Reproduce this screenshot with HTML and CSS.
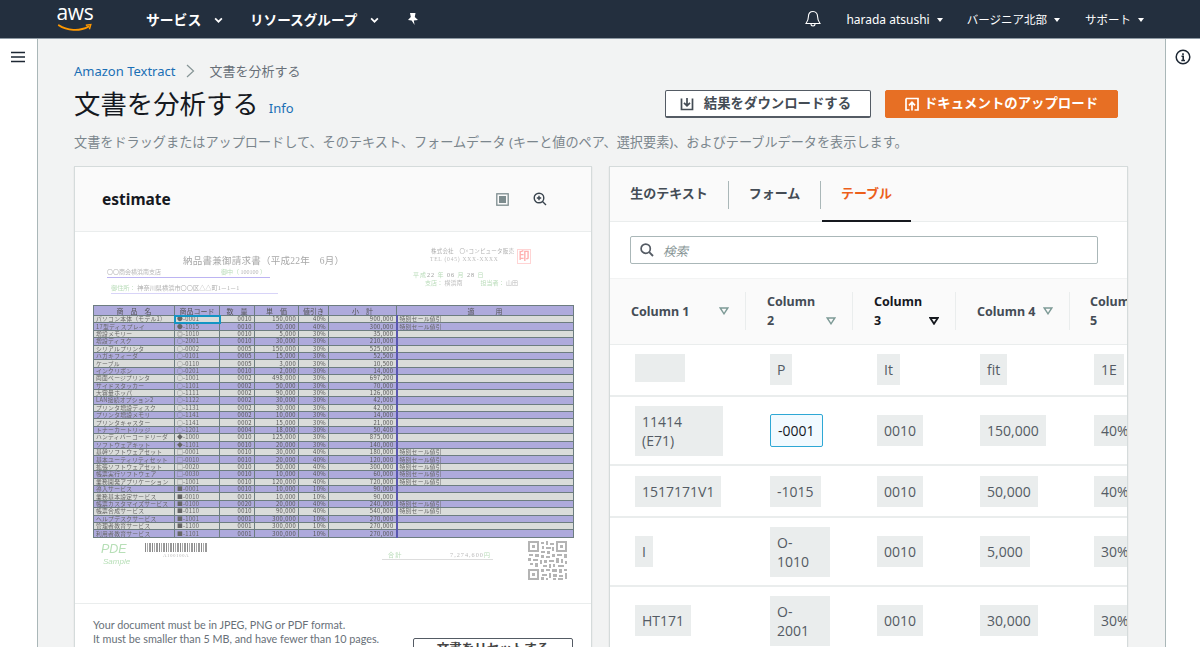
FILE: index.html
```html
<!DOCTYPE html>
<html lang="ja">
<head>
<meta charset="utf-8">
<title>文書を分析する</title>
<link rel="stylesheet" href="styles.css">
</head>
<body>
<header class="topbar">
  <div class="logo">
    <span class="logo-text">aws</span>
    <svg class="logo-smile" viewBox="0 0 38 10" width="38" height="10"><path d="M1 2.500C10 8.500 24 9.500 34 4" fill="none" stroke="#f90" stroke-width="2" stroke-linecap="round"/><path d="M31 2.500L36.500 1.800L35 7" fill="none" stroke="#f90" stroke-width="1.600"/></svg>
  </div>
  <nav class="menu">
    <span class="menu-item menu-services">サービス</span><svg class="caret caret-big" viewBox="0 0 8 5"><path d="M1 1l3 3 3-3" fill="none" stroke="#fff" stroke-width="1.500"/></svg>
    <span class="menu-item menu-groups">リソースグループ</span><svg class="caret caret-big" viewBox="0 0 8 5"><path d="M1 1l3 3 3-3" fill="none" stroke="#fff" stroke-width="1.500"/></svg>
    <svg class="pin" viewBox="0 0 12 14" width="12" height="14"><path d="M3 1h5.500L7.800 5 11 8 6.800 8.600 7.600 13 4.600 8.600 1 8 3.800 5z" fill="#fff"/></svg>
  </nav>
  <div class="account">
    <svg class="bell" viewBox="0 0 16 18" width="16" height="18"><path d="M8 1.500c-3 0-4.600 2.300-4.600 5.200 0 3.600-1 5-2.400 6.800h14c-1.400-1.800-2.400-3.200-2.400-6.800 0-2.900-1.600-5.200-4.600-5.200zM6 14c0 2.600 4 2.600 4 0" fill="none" stroke="#fff" stroke-width="1.100"/></svg>
    <span class="acct acct-user">harada atsushi</span><span class="tri"></span>
    <span class="acct acct-region">バージニア北部</span><span class="tri"></span>
    <span class="acct acct-support">サポート</span><span class="tri"></span>
  </div>
</header>
<div class="layout">
  <aside class="sidenav">
    <svg viewBox="0 0 14 12" width="14" height="12"><path d="M0 1.500h14M0 6h14M0 10.500h14" stroke="#1d2733" stroke-width="1.500"/></svg>
  </aside>
  <main class="main">
    <div class="crumbs"><a class="link">Amazon Textract</a>
      <svg class="crumb-sep" viewBox="0 0 9 14" width="9" height="14"><path d="M1 1l6.500 6L1 13" fill="none" stroke="#879596" stroke-width="1.200"/></svg>
      <span>文書を分析する</span></div>
    <div class="head">
      <h1>文書を分析する</h1><a class="link info">Info</a>
      <div class="actions">
        <button class="btn btn-plain"><svg viewBox="0 0 14 14" width="14" height="14"><path d="M1.500 1.500V12.500H12.500V1.500M7 1v7.500M4 5.800L7 8.800 10 5.800" fill="none" stroke="#444c55" stroke-width="1.700"/></svg>結果をダウンロードする</button>
        <button class="btn btn-primary"><svg viewBox="0 0 14 14" width="14" height="14"><path d="M1 1.500H13V13H9.500M4.500 13H1V1.500M7 13.500V5.500M4 8.300L7 5.300 10 8.300" fill="none" stroke="#fff" stroke-width="1.700"/></svg>ドキュメントのアップロード</button>
      </div>
    </div>
    <p class="desc">文書をドラッグまたはアップロードして、そのテキスト、フォームデータ (キーと値のペア、選択要素)、およびテーブルデータを表示します。</p>
    <div class="cards">
      <section class="card card-doc">
        <div class="doc-head">
          <h2>estimate</h2>
          <svg class="doc-icon-a" viewBox="0 0 13 13" width="13" height="13"><rect x="0.800" y="0.800" width="11.400" height="11.400" fill="none" stroke="#7d8c8e" stroke-width="1.300"/><rect x="3" y="3" width="7" height="7" fill="#7d8c8e"/></svg>
          <svg class="doc-icon-b" viewBox="0 0 14 14" width="14" height="14"><circle cx="6" cy="6" r="4.800" fill="none" stroke="#38434d" stroke-width="1.400"/><path d="M9.500 9.500L13 13M3.800 6h4.400M6 3.800v4.400" stroke="#38434d" stroke-width="1.400"/></svg>
        </div>
        <div class="doc-body">
          <div class="sheet">
            <div class="sheet-title">納品書兼御請求書（平成22年　6月）</div>
            <div class="sheet-company">株式会社　〇×コンピュータ販売</div>
            <div class="sheet-tel">TEL (045) XXX-XXXX</div>
            <div class="sheet-stamp">印</div>
            <div class="sheet-client"><span>〇〇商会横浜南支店</span><span class="green">御中（ <span class="grey">100100</span> ）</span></div>
            <div class="sheet-address"><span class="green">御住所：</span> 神奈川県横浜市〇〇区△△町1－1－1</div>
            <div class="sheet-date"><span class="green">平成</span>22 <span class="green">年</span> 06 <span class="green">月</span> 28 <span class="green">日</span></div>
            <div class="sheet-branch"><span class="green">支店：</span> 横浜南　　　<span class="green">担当者：</span> 山田</div>
            <table class="bill">
              <colgroup><col class="b1"><col class="b2"><col class="b3"><col class="b4"><col class="b5"><col class="b6"><col></colgroup>
              <thead><tr><th>商　品　名</th><th>商品コード</th><th>数　量</th><th>単　価</th><th>値引き</th><th>小　計</th><th>適　　　用</th></tr></thead>
              <tbody>
                <tr><td>パソコン本体（モデル1）</td><td class="hit">●-0001</td><td class="n">0010</td><td class="n">150,000</td><td class="n">40%</td><td class="n">900,000</td><td>特別セール値引</td></tr>
                <tr><td>17型ディスプレイ</td><td>●-1015</td><td class="n">0010</td><td class="n">50,000</td><td class="n">40%</td><td class="n">300,000</td><td>特別セール値引</td></tr>
                <tr><td>増設メモリー</td><td>◎-1010</td><td class="n">0010</td><td class="n">5,000</td><td class="n">30%</td><td class="n">35,000</td><td></td></tr>
                <tr><td>増設ディスク</td><td>○-2001</td><td class="n">0010</td><td class="n">30,000</td><td class="n">30%</td><td class="n">210,000</td><td></td></tr>
                <tr><td>シリアルプリンタ</td><td>○-0002</td><td class="n">0005</td><td class="n">150,000</td><td class="n">30%</td><td class="n">525,000</td><td></td></tr>
                <tr><td>ハガキフィーダ</td><td>○-0101</td><td class="n">0005</td><td class="n">15,000</td><td class="n">30%</td><td class="n">52,500</td><td></td></tr>
                <tr><td>ケーブル</td><td>○-0110</td><td class="n">0005</td><td class="n">3,000</td><td class="n">30%</td><td class="n">10,500</td><td></td></tr>
                <tr><td>インクリボン</td><td>○-0201</td><td class="n">0010</td><td class="n">2,000</td><td class="n">30%</td><td class="n">14,000</td><td></td></tr>
                <tr><td>両面ページプリンタ</td><td>○-1001</td><td class="n">0002</td><td class="n">498,000</td><td class="n">30%</td><td class="n">697,200</td><td></td></tr>
                <tr><td>サイドスタッカー</td><td>○-1101</td><td class="n">0002</td><td class="n">50,000</td><td class="n">30%</td><td class="n">70,000</td><td></td></tr>
                <tr><td>大容量ホッパ</td><td>○-1111</td><td class="n">0002</td><td class="n">90,000</td><td class="n">30%</td><td class="n">126,000</td><td></td></tr>
                <tr><td>LAN接続オプション2</td><td>○-1122</td><td class="n">0002</td><td class="n">30,000</td><td class="n">30%</td><td class="n">42,000</td><td></td></tr>
                <tr><td>プリンタ増設ディスク</td><td>○-1131</td><td class="n">0002</td><td class="n">30,000</td><td class="n">30%</td><td class="n">42,000</td><td></td></tr>
                <tr><td>プリンタ増設メモリ</td><td>○-1141</td><td class="n">0002</td><td class="n">10,000</td><td class="n">30%</td><td class="n">14,000</td><td></td></tr>
                <tr><td>プリンタキャスター</td><td>○-1141</td><td class="n">0002</td><td class="n">15,000</td><td class="n">30%</td><td class="n">21,000</td><td></td></tr>
                <tr><td>トナーカートリッジ</td><td>○-1201</td><td class="n">0004</td><td class="n">18,000</td><td class="n">30%</td><td class="n">50,400</td><td></td></tr>
                <tr><td>ハンディバーコードリーダ</td><td>◆-1000</td><td class="n">0010</td><td class="n">125,000</td><td class="n">30%</td><td class="n">875,000</td><td></td></tr>
                <tr><td>ソフトウェアキット</td><td>◆-1101</td><td class="n">0010</td><td class="n">20,000</td><td class="n">30%</td><td class="n">140,000</td><td></td></tr>
                <tr><td>基幹ソフトウェアセット</td><td>□-0001</td><td class="n">0010</td><td class="n">30,000</td><td class="n">40%</td><td class="n">180,000</td><td>特別セール値引</td></tr>
                <tr><td>基本ユーティリティセット</td><td>□-0010</td><td class="n">0010</td><td class="n">20,000</td><td class="n">40%</td><td class="n">120,000</td><td>特別セール値引</td></tr>
                <tr><td>拡張ソフトウェアセット</td><td>□-0020</td><td class="n">0010</td><td class="n">50,000</td><td class="n">40%</td><td class="n">300,000</td><td>特別セール値引</td></tr>
                <tr><td>帳票実行ソフトウェア</td><td>□-0030</td><td class="n">0010</td><td class="n">10,000</td><td class="n">40%</td><td class="n">60,000</td><td>特別セール値引</td></tr>
                <tr><td>業務開発アプリケーション</td><td>□-1001</td><td class="n">0010</td><td class="n">120,000</td><td class="n">40%</td><td class="n">720,000</td><td>特別セール値引</td></tr>
                <tr><td>導入サービス</td><td>■-0001</td><td class="n">0010</td><td class="n">10,000</td><td class="n">10%</td><td class="n">90,000</td><td></td></tr>
                <tr><td>業務基本設定サービス</td><td>■-0010</td><td class="n">0010</td><td class="n">10,000</td><td class="n">10%</td><td class="n">90,000</td><td></td></tr>
                <tr><td>帳票カスタマイズサービス</td><td>■-0100</td><td class="n">0020</td><td class="n">20,000</td><td class="n">40%</td><td class="n">240,000</td><td>特別セール値引</td></tr>
                <tr><td>帳票合成サービス</td><td>■-0110</td><td class="n">0010</td><td class="n">90,000</td><td class="n">40%</td><td class="n">540,000</td><td>特別セール値引</td></tr>
                <tr><td>ヘルプデスクサービス</td><td>■-1001</td><td class="n">0001</td><td class="n">300,000</td><td class="n">10%</td><td class="n">270,000</td><td></td></tr>
                <tr><td>管理者教育サービス</td><td>■-1100</td><td class="n">0001</td><td class="n">300,000</td><td class="n">10%</td><td class="n">270,000</td><td></td></tr>
                <tr><td>利用者教育サービス</td><td>■-1101</td><td class="n">0001</td><td class="n">300,000</td><td class="n">10%</td><td class="n">270,000</td><td></td></tr>
              </tbody>
            </table>
            <div class="sheet-foot">
              <div class="pde"><div class="pde-big">PDE</div><div class="pde-small">Sample</div></div>
              <div class="barcode-wrap"><div class="barcode"></div><div class="barcode-num">A100100A</div></div>
              <div class="total"><span class="green">合計</span><span class="total-val">7,274,600<span class="green">円</span></span></div>
              <svg class="qr" viewBox="0 0 39 39" width="39" height="39">
                <path d="M0 0h11v11H0zM2 2v7h7V2zM4 4h3v3H4zM28 0h11v11H28zM30 2v7h7V2zM32 4h3v3h-3zM0 28h11v11H0zM2 30v7h7v-7zM4 32h3v3H4z" fill="#b4b4b4" fill-rule="evenodd"/>
                <path d="M13 1h3v2h-3zM18 0h2v4h-2zM22 2h4v2h-4zM14 5h2v3h-2zM18 6h5v2h-5zM24 6h2v4h-2zM13 10h4v2h-4zM19 10h3v3h-3zM1 13h4v2H1zM7 13h4v3H7zM13 14h3v3h-3zM18 15h4v2h-4zM24 13h3v3h-3zM29 13h5v2h-5zM36 13h3v4h-3zM0 17h3v3H0zM5 18h5v2H5zM12 19h2v4h-2zM16 19h3v3h-3zM21 19h5v2h-5zM28 17h3v5h-3zM33 18h2v4h-2zM37 20h2v3h-2zM2 22h3v2H2zM7 22h3v4H7zM15 24h4v2h-4zM21 23h2v4h-2zM25 23h2v3h-2zM30 24h6v2h-6zM13 28h3v3h-3zM18 28h4v2h-4zM24 28h5v3h-5zM31 28h3v4h-3zM36 28h3v2h-3zM14 33h5v2h-5zM21 32h2v5h-2zM25 33h4v3h-4zM31 34h4v2h-4zM37 32h2v6h-2zM13 36h3v3h-3zM18 37h2v2h-2zM25 37h3v2h-3zM30 37h5v2h-5z" fill="#b4b4b4"/>
              </svg>
            </div>
          </div>
        </div>
        <div class="doc-foot">
          <p class="doc-note">Your document must be in JPEG, PNG or PDF format.<br>It must be smaller than 5 MB, and have fewer than 10 pages.<br>Handwriting, forms and tables are supported in the demo.</p>
          <button class="btn-clear">文書をリセットする</button>
        </div>
      </section>
      <section class="card card-results">
        <div class="tabs">
          <span class="tab tab-raw">生のテキスト</span>
          <span class="tab tab-form">フォーム</span>
          <span class="tab tab-table">テーブル</span>
        </div>
        <div class="search-wrap">
          <div class="search">
            <svg viewBox="0 0 14 14" width="14" height="14"><circle cx="5.700" cy="5.700" r="4.600" fill="none" stroke="#545b64" stroke-width="1.700"/><path d="M9.200 9.200L13 13" stroke="#545b64" stroke-width="1.900"/></svg>
            <span>検索</span>
          </div>
        </div>
        <div class="table-clip">
          <table class="results">
            <colgroup><col class="c1"><col class="c2"><col class="c3"><col class="c4"><col class="c5"></colgroup>
            <thead>
              <tr>
                <th class="h1st"><div class="th-in"><span class="th-label">Column 1</span><svg class="sort" viewBox="0 0 10 8"><path d="M1.200 1h7.600L5 6.800z" fill="none" stroke="#7d9a96" stroke-width="1.400"/></svg></div></th>
                <th><div class="th-in th-low"><span class="th-label">Column 2</span><svg class="sort" viewBox="0 0 10 8"><path d="M1.200 1h7.600L5 6.800z" fill="none" stroke="#7d9a96" stroke-width="1.400"/></svg></div></th>
                <th class="th-active"><div class="th-in th-low"><span class="th-label">Column 3</span><svg class="sort" viewBox="0 0 10 8"><path d="M1.200 1h7.600L5 6.800z" fill="none" stroke="#16191f" stroke-width="1.800"/></svg></div></th>
                <th><div class="th-in"><span class="th-label th-nowrap">Column 4</span><svg class="sort" viewBox="0 0 10 8"><path d="M1.200 1h7.600L5 6.800z" fill="none" stroke="#7d9a96" stroke-width="1.400"/></svg></div></th>
                <th class="th-last"><div class="th-in"><span class="th-label th-wide">Column 5</span></div></th>
              </tr>
            </thead>
            <tbody>
              <tr class="r-s"><td class="first"><span class="chip chip-empty"></span></td><td><span class="chip">P</span></td><td><span class="chip">It</span></td><td><span class="chip">fit</span></td><td><span class="chip">1E</span></td></tr>
              <tr class="r-d"><td class="first"><span class="chip chip-wrap">11414 (E71)</span></td><td><span class="chip chip-hit">-0001</span></td><td><span class="chip">0010</span></td><td><span class="chip">150,000</span></td><td><span class="chip">40%</span></td></tr>
              <tr class="r-s"><td class="first"><span class="chip">1517171V1</span></td><td><span class="chip">-1015</span></td><td><span class="chip">0010</span></td><td><span class="chip">50,000</span></td><td><span class="chip">40%</span></td></tr>
              <tr class="r-d"><td class="first"><span class="chip">I</span></td><td><span class="chip chip-code">O-1010</span></td><td><span class="chip">0010</span></td><td><span class="chip">5,000</span></td><td><span class="chip">30%</span></td></tr>
              <tr class="r-d"><td class="first"><span class="chip">HT171</span></td><td><span class="chip chip-code">O-2001</span></td><td><span class="chip">0010</span></td><td><span class="chip">30,000</span></td><td><span class="chip">30%</span></td></tr>
            </tbody>
          </table>
        </div>
      </section>
    </div>
  </main>
  <aside class="tools">
    <svg viewBox="0 0 16 16" width="16" height="16"><circle cx="8" cy="8" r="6.800" fill="none" stroke="#1d2733" stroke-width="1.500"/><path d="M6.500 7.300H8.200V11.500M6.300 11.500H10M8 4.200v1.800" fill="none" stroke="#1d2733" stroke-width="1.600"/></svg>
  </aside>
</div>
</body>
</html>
```
FILE: styles.css
```css
* { box-sizing: border-box; }
html, body { margin: 0; height: 647px; overflow: hidden; }
body { font-family: "Noto Sans", "Noto Sans CJK JP", sans-serif; color: #16191f; background: #fff; }

.topbar { height: 39px; background: #232f3e; border-bottom: 1px solid #8d99a3; display: flex; align-items: center; color: #fff; }
.logo { margin-left: 56px; width: 38px; height: 26px; position: relative; display: flex; flex-direction: column; align-items: center; }
.logo-text { font: 400 21px/18px "Open Sans", sans-serif; color: #fff; letter-spacing: -0.3px; margin-top: -3px; }
.logo-smile { margin-top: 2px; }
.menu { display: flex; align-items: center; margin-left: 52px; }
.menu-item { font-size: 13.800px; font-weight: 700; }
.menu-services { width: 56px; }
.menu-groups { width: 108px; margin-left: 27px; white-space: nowrap; font-size: 13.600px; }
.caret { display: block; }
.caret-big { width: 9px; height: 6px; margin-left: 12px; margin-top: 2px; }
.pin { margin-left: 28px; }
.account { margin-left: auto; display: flex; align-items: center; padding-right: 56px; }
.bell { margin-right: 25px; }
.acct { font-size: 11.500px; white-space: nowrap; }
.acct-user { font-size: 12px; }
.tri { width: 0; height: 0; border: 3.500px solid transparent; border-top: 4px solid #fff; margin: 4px 0 0 7px; }
.acct-region { margin-left: 24px; }
.acct-support { margin-left: 25px; }

.layout { display: flex; height: 608px; }
.sidenav { width: 38px; background: #fff; border-right: 1px solid #aab7b8; flex: none; display: flex; justify-content: center; padding-top: 12px; padding-right: 2px; }
.tools { width: 35px; background: #fff; border-left: 1px solid #aab7b8; flex: none; display: flex; justify-content: center; padding-top: 10px; }
.main { flex: 1; min-width: 0; background: #f2f3f3; padding: 22px 36px 0 36px; overflow: hidden; }

.crumbs { display: flex; align-items: center; font-size: 13px; line-height: 20px; color: #687078; }
.link { color: #1a6fb5; }
.crumb-sep { margin: 0 14px 0 11px; }
.head { display: flex; align-items: center; height: 38px; margin-top: 4px; position: relative; }
h1 { font-size: 26.400px; font-weight: 400; line-height: 38px; margin: 0; }
.info { font-size: 13px; margin-left: 10px; margin-top: 8px; }
.actions { margin-left: auto; display: flex; gap: 14px; margin-right: 11px; }
.btn { height: 28px; font: 700 13.400px/1 "Noto Sans", "Noto Sans CJK JP", sans-serif; border-radius: 2px; display: flex; align-items: center; justify-content: center; padding: 0; }
.btn-plain { width: 206px; background: #fff; border: 1px solid #545b64; border-bottom-width: 2px; color: #444c55; gap: 10px; padding-right: 5px; }
.btn-primary { width: 233px; background: #e76f24; border: 1px solid #e76f24; color: #fff; gap: 5px; }
.desc { margin: 9px 0 0; font-size: 13.150px; line-height: 20px; color: #7b868d; white-space: nowrap; }
.cards { display: flex; gap: 17px; margin-top: 14px; align-items: flex-start; }
.card { background: #fff; border: 1px solid #d5dbdb; height: 520px; box-shadow: 0 1px 1px rgba(0,28,36,.15); flex: none; }
.card-doc { width: 518px; }
.card-results { width: 519px; }

.doc-head { height: 65px; background: #fafafa; border-bottom: 1px solid #eaeded; display: flex; align-items: center; padding: 0 44px 0 27px; }
h2 { font-size: 15.500px; font-weight: 700; margin: 0 auto 0 0; }
.doc-icon-a { margin-right: 24px; }

.doc-body { height: 372px; border-bottom: 1px solid #eaeded; padding: 4px 0 0 18px; }
.sheet { position: relative; width: 481px; height: 340px; font-family: "Liberation Serif", "Noto Sans CJK JP", serif; color: #8a8a8a; filter: blur(0.25px); }
.green { color: #b9dcb9; }
.grey { color: #b5b5b5; }
.sheet-title { position: absolute; left: 90px; top: 17px; font-size: 9.500px; letter-spacing: 0.25px; white-space: nowrap; color: #a8a8a8; }
.sheet-company { position: absolute; left: 338px; top: 11px; font-size: 5.500px; letter-spacing: .2px; white-space: nowrap; color: #b0b0b0; }
.sheet-tel { position: absolute; left: 337px; top: 20px; font-size: 5.500px; letter-spacing: .8px; white-space: nowrap; color: #bbb; }
.sheet-stamp { position: absolute; left: 424px; top: 13px; width: 14px; height: 15px; border: 1px solid #ffd4d4; color: #ffb0b0; font-size: 11px; line-height: 13px; text-align: center; font-weight: 700; }
.sheet-client { position: absolute; left: 14px; top: 31px; width: 163px; border-bottom: 1px solid #bcb4f2; font-size: 6px; display: flex; justify-content: space-between; white-space: nowrap; color: #b5b5b5; padding-right: 4px; height: 11px; line-height: 10px; }
.sheet-address { position: absolute; left: 18px; top: 47px; width: 167px; border-bottom: 1px solid #d8d4f8; font-size: 6.200px; color: #b0b0b0; white-space: nowrap; height: 11px; line-height: 10px; }
.sheet-date { position: absolute; left: 320px; top: 34px; font-size: 6px; color: #999; white-space: nowrap; letter-spacing: 1px; }
.sheet-branch { position: absolute; left: 332px; top: 42px; font-size: 6px; color: #bbb; white-space: nowrap; }

.bill { position: absolute; left: 0; top: 69px; width: 481px; table-layout: fixed; border-collapse: collapse; border: 1.500px solid #7470b4; font-family: "Noto Sans CJK JP", sans-serif; font-size: 6px; color: #666; }
.b1 { width: 81px; } .b2 { width: 45px; } .b3 { width: 35px; } .b4 { width: 44px; } .b5 { width: 30px; } .b6 { width: 68px; }
.bill th { height: 10px; font-size: 7px; font-weight: 400; padding: 0; background: #aeaadc; border: 1px solid #6d7d80; line-height: 8px; white-space: nowrap; overflow: hidden; color: #555; }
.bill td { height: 7.400px; padding: 0 2px; line-height: 6px; border: 1px solid #6d7d80; white-space: nowrap; overflow: hidden; font-size: 5.800px; letter-spacing: .25px; }
.bill tbody tr:nth-child(odd) td { background: #dadcda; }
.bill tbody tr:nth-child(even) td { background: #aeaadc; }
.bill td.n { text-align: right; color: #555; letter-spacing: .4px; }
.bill td.hit { outline: 2px solid #1495c4; outline-offset: -1px; position: relative; }
.bill tr td:last-child { border-left: 2px solid #5a58b0; }

.sheet-foot { position: absolute; left: 8px; top: 304px; width: 473px; display: flex; align-items: flex-start; }
.pde { width: 44px; padding-top: 3px; color: #b7dfb7; font-family: "Liberation Sans", sans-serif; font-style: italic; }
.pde-big { font-size: 12.500px; line-height: 12px; }
.pde-small { font-size: 8px; line-height: 10px; margin: 2px 0 0 2px; }
.barcode-wrap { width: 62px; margin-top: 3px; }
.barcode { height: 9px; background: repeating-linear-gradient(90deg, #888 0 1px, #fff 1px 2px, #aaa 2px 3px, #fff 3px 4px, #999 4px 6px, #fff 6px 7px); }
.barcode-num { font-size: 5px; letter-spacing: .5px; text-align: center; color: #bbb; line-height: 7px; }
.total { position: absolute; left: 281px; top: 10px; width: 111px; border-bottom: 1px solid #ddd; font-size: 6.200px; letter-spacing: 1px; display: flex; justify-content: space-between; padding: 0 2px 0 6px; color: #bbb; line-height: 9px; white-space: nowrap; }
.qr { position: absolute; left: 427px; top: 1px; }

.doc-foot { display: flex; align-items: flex-start; padding: 14px 18px 0 18px; justify-content: space-between; }
.doc-note { margin: 0; font: 400 10.800px/14px "Lato", sans-serif; color: #687078; white-space: nowrap; }
.btn-clear { width: 160px; height: 30px; margin-top: 20px; background: #fff; border: 1px solid #545b64; border-radius: 2px; font: 700 12.500px/20px "Noto Sans", "Noto Sans CJK JP", sans-serif; color: #444; padding: 0 0 8px; flex: none; }

.tabs { height: 55px; background: #fafafa; border-bottom: 1px solid #eaeded; display: flex; align-items: flex-start; padding-top: 14px; position: relative; }
.tab { height: 28px; line-height: 24px; font-size: 13px; font-weight: 700; color: #444c55; text-align: center; }
.tab-raw { width: 119px; border-right: 1px solid #aab7b8; }
.tab-form { width: 92px; border-right: 1px solid #aab7b8; }
.tab-table { width: 89px; color: #ec5f1a; position: relative; margin-left: 1px; }
.tab-table::after { content: ""; position: absolute; left: 0; right: 0; top: 39px; height: 2px; background: #16191f; }
.search-wrap { height: 57px; background: #fff; padding: 14px 0 0 20px; border-bottom: 1px solid #f2f3f3; }
.search { width: 468px; height: 28px; border: 1px solid #aab7b8; border-radius: 2px; display: flex; align-items: center; padding-left: 9px; gap: 9px; background: #fff; }
.search span { font-size: 12.500px; font-style: italic; color: #879596; }

.table-clip { width: 517px; overflow: hidden; }
.results { table-layout: fixed; width: 520px; border-collapse: collapse; }
.c1 { width: 136px; } .c2 { width: 107px; } .c3 { width: 103px; } .c4 { width: 114px; } .c5 { width: 60px; }
.results th { height: 65px; padding: 0; background: #fafafa; border-bottom: 1px solid #eaeded; font-size: 12.500px; font-weight: 700; text-align: left; color: #444c55; line-height: 19px; }
.th-in { display: flex; justify-content: space-between; align-items: center; height: 38px; padding: 0 16px 0 21px; border-right: 1px solid #eaeded; }
.th-low { align-items: flex-end; }
.th-low .sort { margin-bottom: 5px; }
.th-label { width: 50px; display: block; }
.th-nowrap { width: auto; white-space: nowrap; }
.th-wide { width: 50px; white-space: normal; }
.h1st .th-label { white-space: nowrap; }
.th-last .th-in { border-right: 0; padding: 0 0 0 20px; }
.th-active { color: #16191f !important; }
.sort { width: 10px; height: 8px; flex: none; }
.results td { padding: 0 0 0 24px; border-bottom: 2px solid #eaeded; vertical-align: middle; }
.results td.first { padding-left: 25px; }
.r-s td { height: 52px; }
.r-d td { height: 69px; }
.chip { display: inline-block; background: #eaeded; padding: 6px 7px; font: 400 14px/19px "Open Sans", "Noto Sans CJK JP", sans-serif; color: #545b64; vertical-align: middle; white-space: nowrap; }
.chip-empty { width: 50px; height: 28px; padding: 0; margin-bottom: 4px; }
.chip-wrap { width: 88px; white-space: normal; }
.chip-code { width: 60px; white-space: normal; }
.chip-hit { background: #f1faff; border: 1px solid #2ea8d5; border-radius: 2px; color: #16191f; padding: 6px 7px; }
```
